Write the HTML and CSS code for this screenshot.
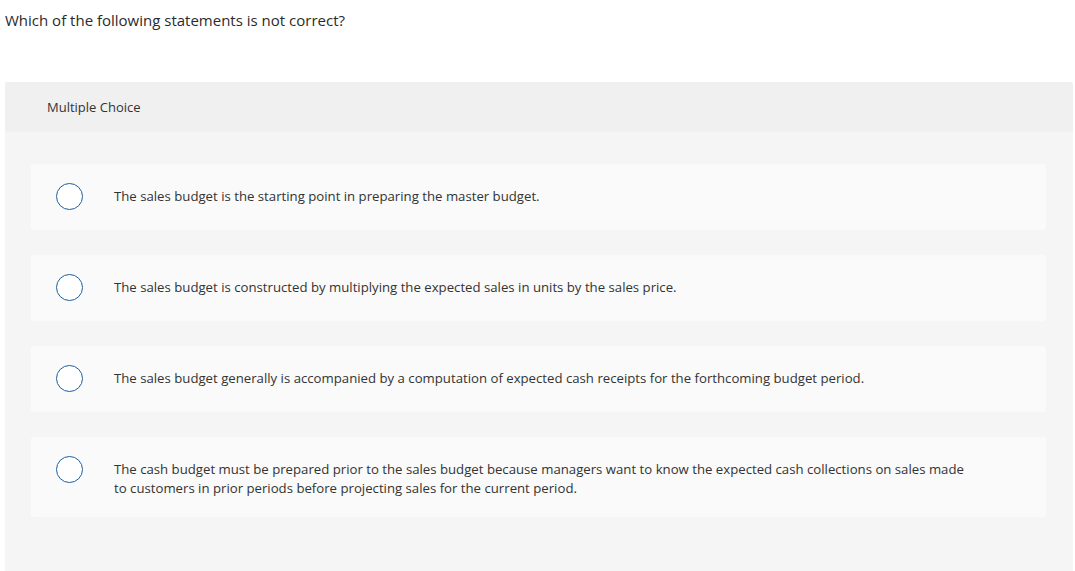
FILE: index.html
```html
<!DOCTYPE html>
<html>
<head>
<meta charset="utf-8">
<link rel="stylesheet" href="styles.css">
</head>
<body>
<div class="question">Which of the following statements is not correct?</div>
<div class="panel">
  <div class="panel-header">Multiple Choice</div>
  <div class="options">
    <div class="option">
      <span class="radio"></span>
      <div class="label">The sales budget is the starting point in preparing the master budget.</div>
    </div>
    <div class="option">
      <span class="radio"></span>
      <div class="label">The sales budget is constructed by multiplying the expected sales in units by the sales price.</div>
    </div>
    <div class="option">
      <span class="radio"></span>
      <div class="label">The sales budget generally is accompanied by a computation of expected cash receipts for the forthcoming budget period.</div>
    </div>
    <div class="option">
      <span class="radio"></span>
      <div class="label">The cash budget must be prepared prior to the sales budget because managers want to know the expected cash collections on sales made to customers in prior periods before projecting sales for the current period.</div>
    </div>
  </div>
</div>
</body>
</html>
```
FILE: styles.css
```css
html, body {
  margin: 0;
  padding: 0;
  background: #ffffff;
}
body {
  font-family: "Open Sans", "Liberation Sans", sans-serif;
  color: #333333;
  padding: 0 2px 0 5px;
}
.question {
  font-size: 15px;
  line-height: 20px;
  padding-top: 10px;
  height: 82px;
  box-sizing: border-box;
  color: #2b2b2b;
}
.panel {
  background: #f5f5f5;
  border-top-right-radius: 3px;
  height: 489px;
}
.panel-header {
  background: #f0f0f0;
  height: 50px;
  display: flex;
  align-items: center;
  padding-left: 42px;
  font-size: 13px;
  border-top-right-radius: 3px;
}
.options {
  display: flex;
  flex-direction: column;
  gap: 25px;
  padding: 32px 27px 0 26px;
}
.option {
  background: #fafafa;
  border-radius: 3px;
  display: flex;
  align-items: flex-start;
  padding: 19px 78px 19px 25px;
}
.radio {
  flex: none;
  box-sizing: border-box;
  width: 27px;
  height: 27px;
  margin-bottom: 1px;
  border: 1.5px solid #1c5f9e;
  border-radius: 50%;
  background: #ffffff;
}
.label {
  margin-left: 31px;
  font-size: 13.2px;
  line-height: 19px;
  padding-top: 4px;
  color: #333333;
}
```
